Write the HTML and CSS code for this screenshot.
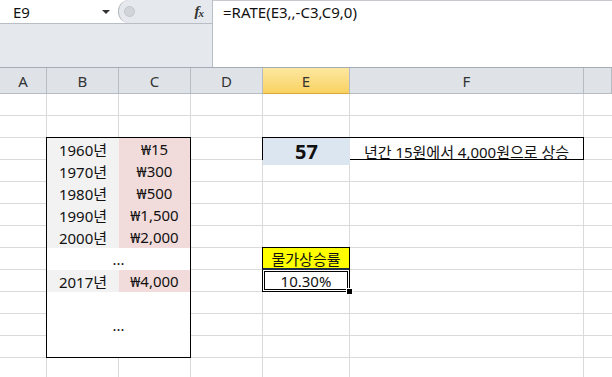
FILE: index.html
```html
<!DOCTYPE html>
<html lang="ko">

<head>
    <meta charset="UTF-8">
    <title>RATE</title>
    <link rel="stylesheet" href="styles.css">
</head>

<body>
    <div class="app">
        <div class="topbar">
            <div class="left-panel">
                <div class="namebox-row">
                    <div class="namebox">
                        <span>E9</span>
                        <span class="arrow"></span>
                    </div>
                    <div class="fx-zone">
                        <span class="pill"></span>
                        <span class="fx">f<sub>x</sub></span>
                    </div>
                </div>
                <div class="left-fill"></div>
            </div>
            <div class="formula">=RATE(E3,,-C3,C9,0)</div>
        </div>

        <div class="sheet">
            <div class="hd">A</div>
            <div class="hd">B</div>
            <div class="hd">C</div>
            <div class="hd">D</div>
            <div class="hd active">E</div>
            <div class="hd">F</div>
            <div class="hd"></div>

            <div class="data-box">
                <div class="c yr">1960년</div><div class="c won">₩15</div>
                <div class="c yr">1970년</div><div class="c won">₩300</div>
                <div class="c yr">1980년</div><div class="c won">₩500</div>
                <div class="c yr">1990년</div><div class="c won">₩1,500</div>
                <div class="c yr">2000년</div><div class="c won">₩2,000</div>
                <div class="c span2">...</div>
                <div class="c yr">2017년</div><div class="c won">₩4,000</div>
                <div class="c span2">...</div>
            </div>

            <div class="result-box">
                <div class="c big">57</div>
                <div class="c">년간 15원에서 4,000원으로 상승</div>
            </div>

            <div class="c label-cell">물가상승률</div>
            <div class="c rate-cell">10.30%<span class="handle"></span></div>
        </div>
    </div>
</body>

</html>
```

FILE: styles.css
```css
body {
    margin: 0;
    font-family: "Noto Sans", "Noto Sans CJK KR", sans-serif;
    color: #111;
}

.app {
    width: 612px;
    height: 377px;
    overflow: hidden;
    background: #fff;
}

/* formula bar */
.topbar {
    display: flex;
    height: 67px;
    border-bottom: 1px solid #a5acb5;
}

.left-panel {
    width: 212px;
    display: flex;
    flex-direction: column;
    border-right: 1px solid #b9bec6;
}

.namebox-row {
    display: flex;
    height: 23px;
    border-bottom: 1px solid #b9bec6;
}

.namebox {
    width: 118px;
    display: flex;
    align-items: center;
    justify-content: space-between;
    padding: 0 8px 0 13px;
    box-sizing: border-box;
    background: #fff;
    font-size: 15px;
}

.arrow {
    width: 0;
    height: 0;
    border-left: 4px solid transparent;
    border-right: 4px solid transparent;
    border-top: 4px solid #333;
}

.fx-zone {
    flex: 1;
    display: flex;
    align-items: center;
    justify-content: space-between;
    background: #e5e8ec;
    border-radius: 11px 0 0 11px;
    border-left: 1px solid #b3b8bf;
    padding: 0 8px 0 5px;
}

.pill {
    width: 9px;
    height: 9px;
    border-radius: 50%;
    background: #d1d4d8;
    border: 1px solid #c3c7cc;
}

.fx {
    font-family: "Liberation Serif", serif;
    font-style: italic;
    font-weight: bold;
    font-size: 15px;
    color: #333;
}

.fx sub {
    font-size: 11px;
    vertical-align: -1px;
    margin-left: -1px;
}

.left-fill {
    flex: 1;
    background: #e5e8ec;
}

.formula {
    flex: 1;
    padding: 1px 0 0 10px;
    font-size: 15px;
    border-top: 1px solid #c6cacf;
}

/* sheet grid */
.sheet {
    display: grid;
    grid-template-columns: 47px 72px 72px 72px 87px 234px 1fr;
    grid-template-rows: 26px repeat(13, 22px);
    background-color: #fff;
    background-image:
        repeating-linear-gradient(to bottom, transparent 0 21px, #dadada 21px 22px),
        linear-gradient(#dadada, #dadada),
        linear-gradient(#dadada, #dadada),
        linear-gradient(#dadada, #dadada),
        linear-gradient(#dadada, #dadada),
        linear-gradient(#dadada, #dadada),
        linear-gradient(#dadada, #dadada);
    background-size: 100% 100%, 1px 100%, 1px 100%, 1px 100%, 1px 100%, 1px 100%, 1px 100%;
    background-repeat: no-repeat;
    background-position: 0 26px, 46px 0, 118px 0, 190px 0, 262px 0, 349px 0, 583px 0;
}

.hd {
    background: #dfe3e8;
    border-right: 1px solid #b6bcc4;
    border-bottom: 1px solid #b6bcc4;
    display: flex;
    align-items: center;
    justify-content: center;
    font-size: 15px;
    color: #333;
}

.hd.active {
    background: linear-gradient(#fde7a0, #f9d262);
    border-bottom-color: #d9a93c;
}

.c {
    display: flex;
    align-items: center;
    justify-content: center;
    font-size: 15px;
    white-space: nowrap;
}

.data-box {
    grid-column: 2 / 4;
    grid-row: 4 / 14;
    margin: -1px 0 0 -1px;
    border: 1px solid #000;
    display: grid;
    grid-template-columns: 72px 71px;
    grid-template-rows: repeat(7, 22px) 65px;
    background: #fff;
}

.yr {
    background: #f2f2f2;
}

.won {
    background: #f2dcdb;
}

.span2 {
    grid-column: span 2;
    background: #fff;
}

.result-box {
    grid-column: 5 / 7;
    grid-row: 4;
    margin: -1px 0 0 -1px;
    border: 1px solid #000;
    display: grid;
    grid-template-columns: 87px 1fr;
    background: #fff;
}

.big {
    background: #dce6f1;
    font-weight: bold;
    font-size: 20px;
}

.label-cell {
    grid-column: 5;
    grid-row: 9;
    margin: -1px 0 0 -1px;
    border: 1px solid #000;
    border-bottom: 2px solid #1f2a44;
    background: #ffff00;
}

.rate-cell {
    grid-column: 5;
    grid-row: 10;
    margin: 0 0 0 -1px;
    border: 1px solid #000;
    border-top: none;
    box-shadow: inset 0 0 0 1px #fff, inset 0 0 0 2px #000;
    background: #fff;
    position: relative;
}

.handle {
    position: absolute;
    right: -4px;
    bottom: -4px;
    width: 5px;
    height: 5px;
    background: #000;
    border: 1px solid #fff;
}
```
